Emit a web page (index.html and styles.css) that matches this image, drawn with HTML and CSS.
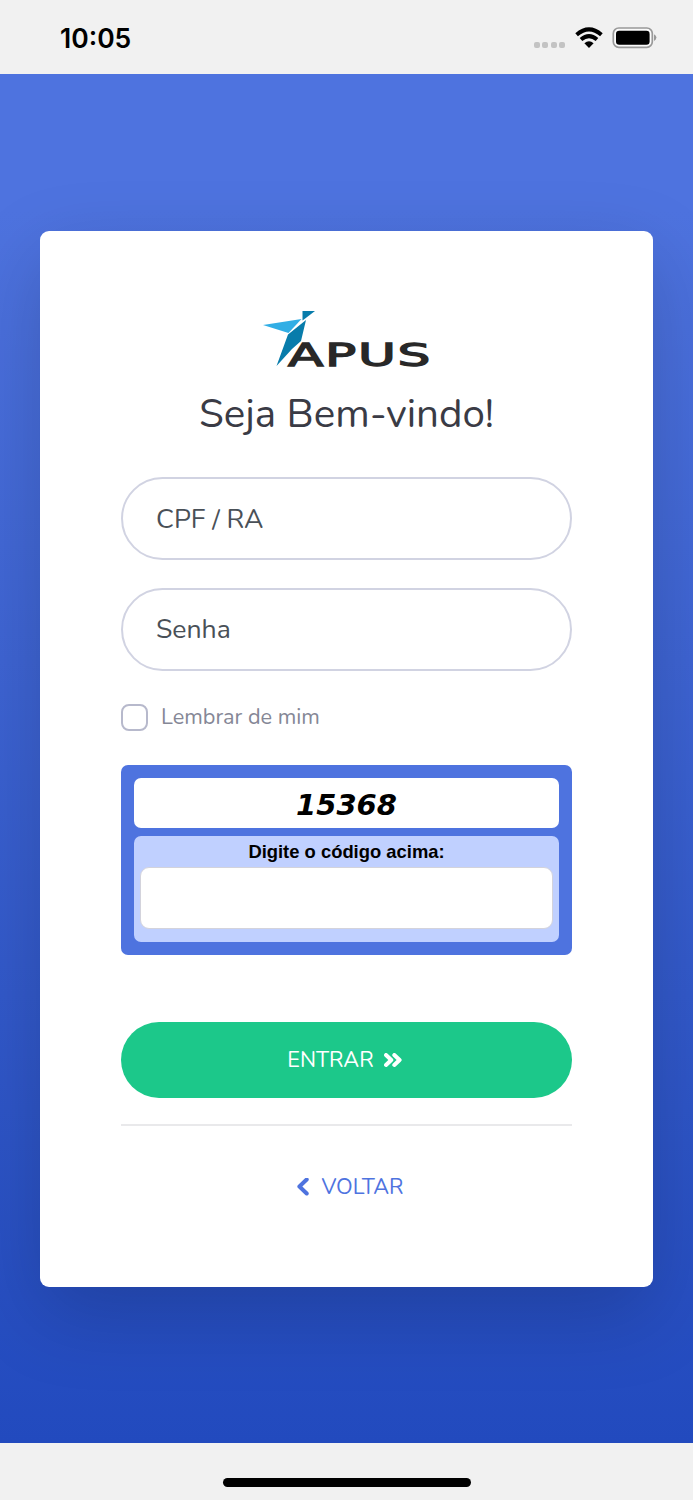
FILE: index.html
```
<!DOCTYPE html>
<html lang="pt-br">
<head>
  <meta charset="UTF-8" />
  <meta name="viewport" content="width=device-width, initial-scale=1.0"/>
  <title>Apus - Login</title>
  <link rel="stylesheet" href="styles.css">
</head>
<body>

  <header class="status-bar">
    <span class="time">10:05</span>
    <div class="status-icons">
      <span class="dots"><i></i><i></i><i></i><i></i></span>
      <svg class="wifi" width="28" height="22" viewBox="0 0 28 22">
        <g fill="none" stroke="#000" stroke-width="4">
          <path d="M1.600 7.800Q14-2.900 26.400 7.800"/>
          <path d="M6 12.500Q14 5.600 22 12.500"/>
        </g>
        <path d="M9.400 16.300Q14 12.300 18.600 16.300L14 20.900Z"/>
      </svg>
      <svg class="battery" width="45" height="22" viewBox="0 0 45 22">
        <rect x="1.300" y="1" width="39" height="19.300" rx="5.500" fill="#fafafa" stroke="#999" stroke-width="1.700"/>
        <rect x="4" y="3.700" width="33.600" height="14" rx="3.200"/>
        <path d="M42 7.200Q44.400 8.400 44.400 10.600T42 14Z" fill="#999"/>
      </svg>
    </div>
  </header>

  <main class="page">
    <form class="card">
      <svg class="logo" width="176" height="60" viewBox="0 0 176 60" role="img" aria-label="Apus">
        <path d="M40.500 1H53L40.500 10.500Z" fill="#087cab"/>
        <path d="M1 15L39.500 9L26.500 23Z" fill="#31aee5"/>
        <path d="M26 24.500L44 10L39 31L30 39L14.500 56Z" fill="#087cab"/>
        <text x="26" y="55.500" textLength="144" lengthAdjust="spacingAndGlyphs">APUS</text>
      </svg>
      <h1>Seja Bem-vindo!</h1>

      <input class="field" type="text" placeholder="CPF / RA">
      <input class="field" type="password" placeholder="Senha">

      <label class="remember">
        <input type="checkbox">
        <span>Lembrar de mim</span>
      </label>

      <div class="captcha">
        <div class="code">15368</div>
        <div class="answer">
          <label for="codigo">Digite o código acima:</label>
          <input id="codigo" type="text">
        </div>
      </div>

      <button class="btn-enter" type="button">
        <span>ENTRAR</span>
        <svg width="18" height="15" viewBox="0 0 18 15">
          <path d="M2 2L7.300 7L2 12M10.300 2L15.600 7L10.300 12"/>
        </svg>
      </button>

      <hr>

      <a class="back-link" href="#">
        <svg width="12" height="18" viewBox="0 0 12 18">
          <path d="M9.700 1.500L2.400 8.500L9.700 15.500"/>
        </svg>
        <span>VOLTAR</span>
      </a>
    </form>
  </main>

  <footer class="home-bar"><div></div></footer>

</body>
</html>
```
FILE: styles.css
```
* {
  box-sizing: border-box;
}

body {
  margin: 0;
  height: 1500px;
  display: flex;
  flex-direction: column;
  font-family: Nunito, "Open Sans", sans-serif;
  font-weight: 400;
  background-color: #f1f1f1;
}

.status-bar {
  height: 74px;
  padding: 0 36px 0 60px;
  display: flex;
  justify-content: space-between;
}

.time {
  margin-top: 22px;
  font: 600 26.5px/32px Inter, sans-serif;
  color: #000;
}

.status-icons {
  display: flex;
  margin-top: 27px;
}

.dots {
  display: flex;
  gap: 2.5px;
  margin: 15px 10px 0 0;
}

.dots i {
  width: 6px;
  height: 6px;
  border-radius: 2px;
  background-color: #c3c3c3;
}

.battery {
  margin-left: 9px;
}

.page {
  height: 1369px;
  padding: 157px 40px 0;
  background: linear-gradient(180deg, #4e73df 10%, #224abe 100%);
  overflow: hidden;
}

.card {
  height: 1056px;
  padding: 79px 81px 0;
  display: flex;
  flex-direction: column;
  background-color: #fff;
  border-radius: 9px;
  box-shadow: 0 27px 80px rgba(0, 0, 0, 0.175);
}

.logo {
  display: block;
  flex: none;
  margin-left: 141px;
  overflow: visible;
}

.logo text {
  font: 31.5px "DejaVu Sans", sans-serif;
  letter-spacing: 1px;
  fill: #282828;
  stroke: #282828;
  stroke-width: 1.3;
}

h1 {
  margin: 16px 0 36px;
  font-size: 40.3px;
  line-height: 55px;
  font-weight: 400;
  text-align: center;
  color: #3a3b45;
}

.field {
  height: 83px;
  margin-bottom: 27.5px;
  padding: 0 33px;
  border: 2px solid #d1d3e2;
  border-radius: 42px;
  background-color: #fff;
  font: inherit;
  font-size: 26.6px;
  outline: none;
}

.field::placeholder {
  color: #495057;
  opacity: 1;
}

.remember {
  height: 27px;
  margin: 6px 0 34px;
  display: flex;
  align-items: center;
  gap: 13px;
  font-size: 21.7px;
  color: #858796;
}

.remember span {
  position: relative;
  top: -1px;
}

.remember input {
  appearance: none;
  width: 27px;
  height: 27px;
  margin: 0;
  border: 2px solid #b7b9cc;
  border-radius: 8px;
}

.captcha {
  height: 190px;
  padding: 13px;
  border-radius: 7px;
  background-color: #4e73df;
  color: #000;
}

.code {
  height: 50px;
  margin-bottom: 8px;
  border-radius: 7px;
  background-color: #fff;
  font: italic bold 29px/54px "DejaVu Sans", Verdana, sans-serif;
  text-align: center;
}

.answer {
  height: 106px;
  padding: 0 6px;
  border-radius: 7px;
  background-color: #c0d0ff;
}

.answer label {
  display: block;
  font: bold 18.4px/32px "Liberation Sans", Arial, sans-serif;
  text-align: center;
}

.answer input {
  display: block;
  width: 100%;
  height: 62px;
  margin-top: -1px;
  border: 1px solid #d3d3dc;
  border-radius: 9px;
  background-color: #fff;
}

.btn-enter {
  height: 76px;
  margin: 67px 0 26px;
  display: flex;
  align-items: center;
  justify-content: center;
  gap: 10px;
  padding: 0 4px 0 0;
  border: 0;
  border-radius: 38px;
  background-color: #1cc88a;
  font: inherit;
  font-size: 21.7px;
  color: #fff;
}

.btn-enter path,
.back-link path {
  fill: none;
  stroke: currentColor;
  stroke-width: 4;
  stroke-linecap: round;
  stroke-linejoin: round;
}

hr {
  width: 100%;
  height: 2px;
  margin: 0 0 46px;
  border: 0;
  background-color: #e9e9eb;
}

.back-link {
  height: 30px;
  display: flex;
  align-items: center;
  justify-content: center;
  gap: 13px;
  padding-left: 7px;
  font-size: 21.7px;
  color: #4e73df;
  text-decoration: none;
}

.home-bar {
  height: 57px;
  padding-top: 35px;
}

.home-bar div {
  width: 248px;
  height: 9px;
  margin: 0 auto;
  border-radius: 5px;
  background-color: #000;
}
```
